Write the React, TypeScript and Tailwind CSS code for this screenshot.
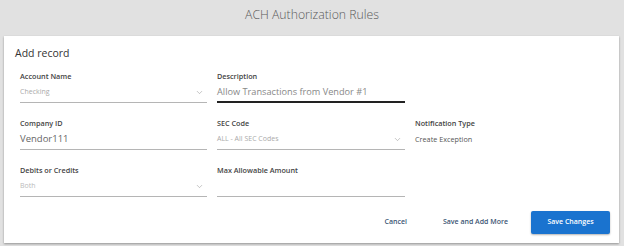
import { ChevronDown } from 'lucide-react';

const font = { fontFamily: '"Open Sans", "Noto Sans", sans-serif' };

type FieldProps = {
  label: string;
  value: string;
  select?: boolean;
  focused?: boolean;
  valueClass?: string;
  plain?: boolean;
};

const Field = ({ label, value, select, focused, valueClass, plain }: FieldProps) => (
  <div className="flex flex-col">
    <div className="h-[12px] text-[7.25px] leading-[12px] font-semibold text-[#444]">{label}</div>
    <div
      className={`h-[21px] flex items-center justify-between ${
        plain ? '' : focused ? 'border-b-2 border-[#222]' : 'border-b border-[#b5b5b5]'
      }`}
    >
      <span className={valueClass}>{value}</span>
      {select && <ChevronDown className="w-[9px] h-[9px] mr-[3px] text-[#999]" strokeWidth={1.5} />}
    </div>
  </div>
);

export default function App() {
  return (
    <div className="w-[624px] h-[246px] bg-[#e1e1e1] overflow-hidden" style={font}>
      <div className="h-[36px] flex items-center justify-center text-[12.25px] font-light text-[#5a5a5a] pb-[6px]">
        ACH Authorization Rules
      </div>
      <div className="ml-[4px] mr-[5px] h-[207px] bg-white shadow-[0_1px_2px_rgba(0,0,0,0.35)] px-[8px] pt-[8px]">
        <div className="h-[18px] pl-[3px] text-[10.5px] leading-[18px] text-[#333]">Add record</div>
        <div className="mt-[8px] px-[8px] grid grid-cols-[187px_188px_1fr] gap-x-[10px] gap-y-[14px]">
          <Field label="Account Name" value="Checking" select valueClass="text-[7px] text-[#aaa]" />
          <Field
            label="Description"
            value="Allow Transactions from Vendor #1"
            focused
            valueClass="text-[9.2px] text-[#888]"
          />
          <div />
          <Field label="Company ID" value="Vendor111" valueClass="text-[9.5px] text-[#666]" />
          <Field label="SEC Code" value="ALL - All SEC Codes" select valueClass="text-[7px] text-[#aaa]" />
          <Field label="Notification Type" value="Create Exception" plain valueClass="text-[7.25px] text-[#555]" />
          <Field label="Debits or Credits" value="Both" select valueClass="text-[7px] text-[#bbb]" />
          <Field label="Max Allowable Amount" value="" />
          <div />
        </div>
        <div className="mt-[14px] flex items-center justify-end pr-[1px]">
          <button className="text-[7px] font-semibold text-[#3d5674]">Cancel</button>
          <button className="ml-[36px] text-[7px] font-semibold text-[#3d5674]">Save and Add More</button>
          <button className="ml-[23px] w-[79px] h-[23px] rounded-[2px] bg-[#1a73cf] text-white text-[7px] font-semibold shadow-[0_1px_2px_rgba(0,0,0,0.3)]">
            Save Changes
          </button>
        </div>
      </div>
    </div>
  );
}
